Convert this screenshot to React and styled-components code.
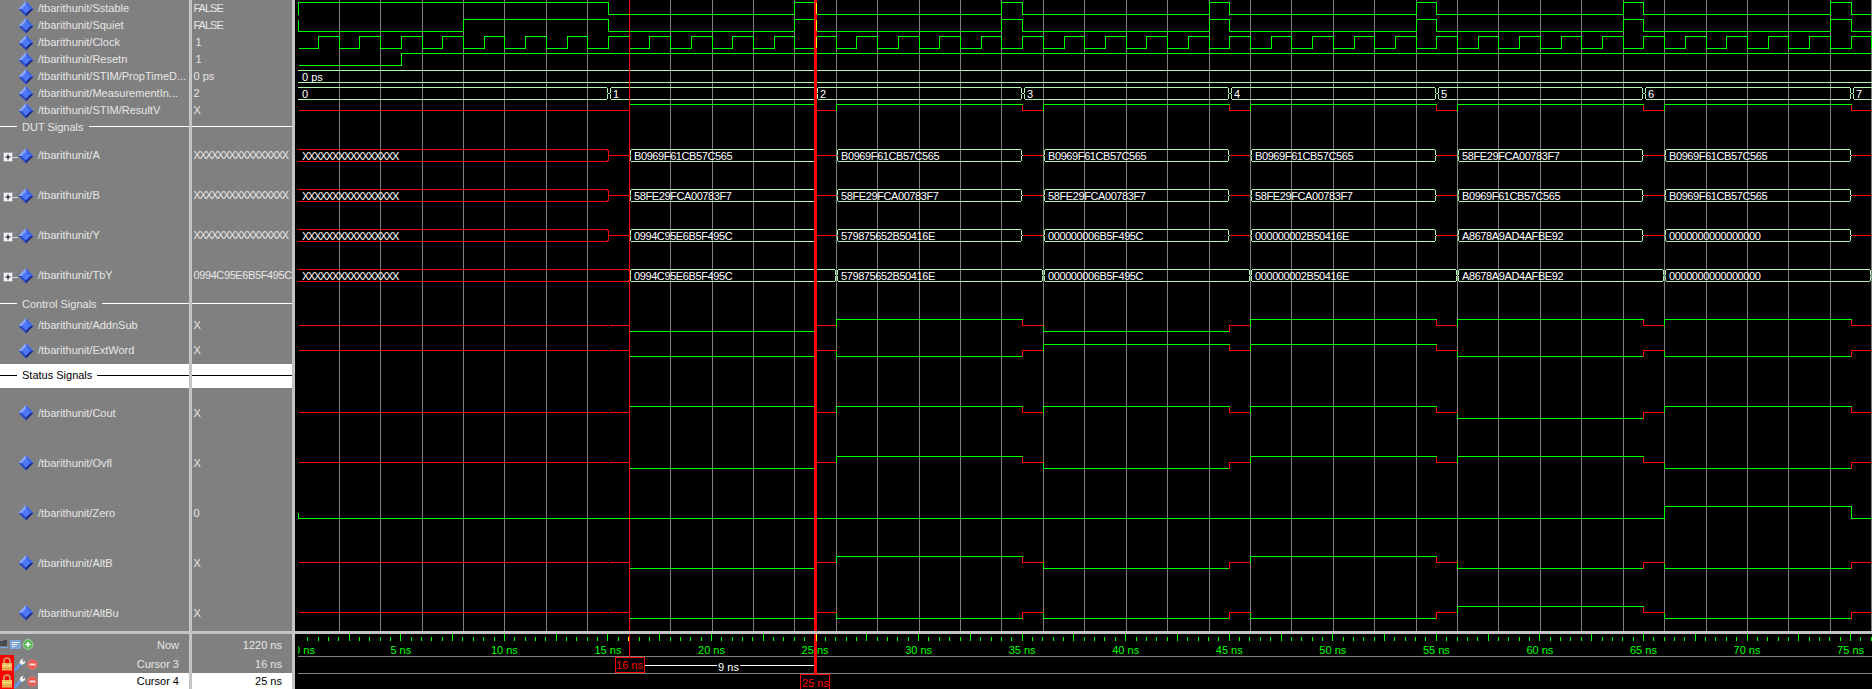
import styled, { createGlobalStyle } from 'styled-components';

const GlobalStyle = createGlobalStyle`
  html, body {
    margin: 0;
    background: #000;
    overflow: hidden;
  }
`;

// time axis: page x for a time in ns
const X = (t) => Math.round(297.3 + 20.71 * t);
const P = (t) => X(t) + 0.5;

const GREEN = '#00ff00';
const RED = '#ff0000';
const PALE = '#b2f5b2';
const GRID = '#808080';
const FONT = '"Liberation Sans", Arial, sans-serif';

const SLOTS = [16, 26, 36, 46, 56, 66];

const ROWS = [
  { name: '/tbarithunit/Sstable', value: 'FALSE', h: 17, tight: -1 },
  { name: '/tbarithunit/Squiet', value: 'FALSE', h: 17, tight: -1 },
  { name: '/tbarithunit/Clock', value: '1', h: 17, pad: 2 },
  { name: '/tbarithunit/Resetn', value: '1', h: 17, pad: 2 },
  { name: '/tbarithunit/STIM/PropTimeD...', value: '0 ps', h: 17 },
  { name: '/tbarithunit/MeasurementIn...', value: '2', h: 17 },
  { name: '/tbarithunit/STIM/ResultV', value: 'X', h: 17 },
  { divider: 'DUT Signals', h: 17 },
  { name: '/tbarithunit/A', value: 'XXXXXXXXXXXXXXXX', h: 40, plus: true, tight: -1.45 },
  { name: '/tbarithunit/B', value: 'XXXXXXXXXXXXXXXX', h: 40, plus: true, tight: -1.45 },
  { name: '/tbarithunit/Y', value: 'XXXXXXXXXXXXXXXX', h: 40, plus: true, tight: -1.45 },
  { name: '/tbarithunit/TbY', value: '0994C95E6B5F495C', h: 40, plus: true, tight: -0.4 },
  { divider: 'Control Signals', h: 17 },
  { name: '/tbarithunit/AddnSub', value: 'X', h: 25 },
  { name: '/tbarithunit/ExtWord', value: 'X', h: 25 },
  { divider: 'Status Signals', h: 25, selected: true },
  { name: '/tbarithunit/Cout', value: 'X', h: 50 },
  { name: '/tbarithunit/Ovfl', value: 'X', h: 50 },
  { name: '/tbarithunit/Zero', value: '0', h: 50 },
  { name: '/tbarithunit/AltB', value: 'X', h: 50 },
  { name: '/tbarithunit/AltBu', value: 'X', h: 50 },
];

const RESULTS = [
  { y: 110.5, levels: 'HHHHHH', up: 6 },
  { y: 325.5, levels: 'LHLHHH' },
  { y: 350.5, levels: 'LLHHLL' },
  { y: 412.5, levels: 'HHHHLH' },
  { y: 462.5, levels: 'LHLHHL' },
  { y: 562.5, levels: 'LHLHLL' },
  { y: 612.5, levels: 'LLLLHL' },
];

const HEX_A = ['B0969F61CB57C565', 'B0969F61CB57C565', 'B0969F61CB57C565', 'B0969F61CB57C565', '58FE29FCA00783F7', 'B0969F61CB57C565'];
const HEX_B = ['58FE29FCA00783F7', '58FE29FCA00783F7', '58FE29FCA00783F7', '58FE29FCA00783F7', 'B0969F61CB57C565', 'B0969F61CB57C565'];
const HEX_Y = ['0994C95E6B5F495C', '579875652B50416E', '000000006B5F495C', '000000002B50416E', 'A8678A9AD4AFBE92', '0000000000000000'];

const PULSES = [24, 25, 34, 35, 44, 45, 54, 55, 64, 65, 74, 75];

const bitPath = (start, y0, y1, times) => {
  let d = start;
  let hi = false;
  times.forEach((t) => {
    hi = !hi;
    d += `H${P(t)}V${hi ? y1 : y0}`;
  });
  return d + 'H1880';
};

// one bus segment with the little pointed ends
const busPath = (t1, t2, top, startOff = 1.5) => {
  const a = X(t1) + startOff;
  const b = X(t2) - 0.5;
  const mid = top + 6;
  const bot = top + 12;
  return `M${a + 1} ${top}H${b - 1}L${b} ${top + 1}V${mid - 1}L${b + 1} ${mid}L${b} ${mid + 1}V${bot - 1}L${b - 1} ${bot}H${a + 1}L${a} ${bot - 1}V${mid + 1}L${a - 1} ${mid}L${a} ${mid - 1}V${top + 1}Z`;
};

const clockTimes = [];
for (let t = 1; t <= 77; t++) clockTimes.push(t);

const Window = styled.div`
  width: 1872px;
  height: 689px;
  overflow: hidden;
  display: grid;
  grid-template-columns: 189px 100px 1577px;
  grid-template-rows: 631px 55px;
  column-gap: 3px;
  row-gap: 3px;
  background: #c4c4c4;
  font: 11px ${FONT};
`;

const Pane = styled.div`
  background: #808080;
  overflow: hidden;
  color: #e6e6e6;
`;

const WavePane = styled.div`
  background: #000;
  overflow: hidden;
  line-height: 0;
`;

const SignalRow = styled.div`
  height: ${(p) => p.$h}px;
  display: flex;
  align-items: center;
  box-sizing: border-box;
  white-space: nowrap;
  position: relative;
`;

// the tall rows sit a pixel lower than the short ones
const NameText = styled.span`
  margin-left: 4px;
  padding-bottom: ${(p) => (p.$h === 50 ? 0 : 2)}px;
`;

const ValueText = styled.span`
  margin-left: ${(p) => 1.5 + (p.$pad || 0)}px;
  padding-bottom: ${(p) => (p.$h === 50 ? 0 : 2)}px;
  letter-spacing: ${(p) => p.$tight || 0}px;
`;

const DividerLabel = styled.span`
  padding-bottom: 2px;
`;

const DividerRow = styled.div`
  height: ${(p) => p.$h}px;
  display: flex;
  align-items: center;
  gap: 5px;
  white-space: nowrap;
  background: ${(p) => (p.$selected ? '#fff' : 'transparent')};
  color: ${(p) => (p.$selected ? '#000' : '#e6e6e6')};
  box-sizing: border-box;
  border-top: ${(p) => (p.$selected ? '1px solid #808080' : '0')};
`;

const Rule = styled.i`
  display: block;
  height: 1px;
  margin-bottom: 2px;
  background: ${(p) => (p.$selected ? '#000' : '#fff')};
  flex: ${(p) => (p.$w ? `0 0 ${p.$w}px` : '1')};
`;

const IconSvg = styled.svg`
  display: block;
  flex: none;
`;

const DiamondSlot = styled.div`
  flex: none;
  margin-left: 18px;
`;

const PlusSlot = styled(IconSvg)`
  position: absolute;
  left: 3px;
  top: calc(50% - 4px);
`;

const FootRow = styled.div`
  height: ${(p) => p.$h}px;
  display: flex;
  align-items: center;
  box-sizing: border-box;
  background: ${(p) => (p.$selected ? '#fff' : 'transparent')};
  color: ${(p) => (p.$selected ? '#000' : '#e6e6e6')};
  justify-content: flex-end;
  padding-right: 10px;
`;

const NameFootRow = styled.div`
  height: ${(p) => p.$h}px;
  display: flex;
  align-items: stretch;
`;

const LockCell = styled.div`
  flex: none;
  width: 14px;
  background: ${(p) => (p.$on ? RED : 'transparent')};
  display: flex;
  align-items: center;
  justify-content: center;
`;

const ToolCell = styled.div`
  flex: none;
  width: ${(p) => p.$w}px;
  display: flex;
  align-items: center;
  gap: 1px;
`;

const FootLabel = styled.div`
  flex: 1;
  display: flex;
  align-items: center;
  justify-content: flex-end;
  padding-right: 10px;
  background: ${(p) => (p.$selected ? '#fff' : 'transparent')};
  color: ${(p) => (p.$selected ? '#000' : '#e6e6e6')};
`;

const WaveSvg = styled.svg`
  display: block;
  font: 11px ${FONT};
`;

const Diamond = () => (
  <IconSvg width="16" height="16" viewBox="0 0 16 16">
    <polygon points="8,0 15.5,8 8,8" fill="#3f66e6" />
    <polygon points="8,0 0.5,8 8,8" fill="#86a8ff" />
    <polygon points="0.5,8 8,15.5 8,8" fill="#2c49c4" />
    <polygon points="15.5,8 8,15.5 8,8" fill="#1c2c8c" />
    <polygon points="8,3.5 12.5,8 8,12.5 3.5,8" fill="#4f79f2" />
  </IconSvg>
);

const PlusBox = () => (
  <PlusSlot width="16" height="11" viewBox="0 0 16 11">
    <path d="M10 5.5H15" stroke="#d8d8d8" />
    <rect x="0.5" y="0.5" width="9" height="9" fill="#f4f4f8" stroke="#a0a0b0" />
    <path d="M2.5 5H7.5M5 2.5V7.5" stroke="#000" />
  </PlusSlot>
);

const Lock = () => (
  <IconSvg width="12" height="14" viewBox="0 0 12 14">
    <path d="M3 6V4a3 3 0 0 1 6 0v2" fill="none" stroke="#c8a878" strokeWidth="1.5" />
    <rect x="1" y="6" width="10" height="7.5" fill="#f0bd58" />
    <rect x="1" y="8" width="10" height="1" fill="#f8dc90" />
    <rect x="1" y="11" width="10" height="1" fill="#d89c40" />
  </IconSvg>
);

const Wrench = () => (
  <IconSvg width="12" height="13" viewBox="0 0 12 13">
    <path d="M1.5 11.5L7 5.5" stroke="#6a98e4" strokeWidth="3" strokeLinecap="round" />
    <path d="M5.5 5L6.5 2L9.5 0.5L8.5 3L9.5 4L11.5 2.5L11 5L8 7Z" fill="#f0f0f0" />
  </IconSvg>
);

const MinusCircle = () => (
  <IconSvg width="11" height="11" viewBox="0 0 11 11">
    <circle cx="5.5" cy="5.5" r="5" fill="#e85a50" stroke="#c88080" />
    <rect x="2.5" y="4.5" width="6" height="2" fill="#f8e0e0" />
  </IconSvg>
);

const NowTools = () => (
  <IconSvg width="34" height="12" viewBox="0 0 34 12">
    <path d="M0 2H3L4 1H7V7H0Z" fill="#4a4a52" />
    <path d="M0 8.5H8" stroke="#6fa8e8" />
    <rect x="10" y="1" width="11" height="9" fill="#7fa8d8" />
    <path d="M12 3.5H19M12 5.5H17M12 7.5H15" stroke="#f0f4ff" />
    <circle cx="28" cy="5.5" r="5" fill="#5fb85f" stroke="#a0d0a0" />
    <path d="M25.5 5.5H30.5M28 3V8" stroke="#fff" strokeWidth="1.4" />
  </IconSvg>
);

const BusText = ({ x, y, children, tight = -0.4 }) => (
  <text x={x} y={y} fill="#fff" letterSpacing={tight}>
    {children}
  </text>
);

const Bus = ({ top, labels, midline }) => {
  const mid = top + 6;
  const end = midline ? X(15) : X(16);
  return (
    <g fill="none" strokeWidth="1" shapeRendering="crispEdges">
      <path d={`M298 ${top}H${end - 1}L${end} ${top + 1}V${mid - 1}L${end + 1} ${mid}L${end} ${mid + 1}V${top + 11}L${end - 1} ${top + 12}H298`} stroke={RED} />
      <BusText x={302} y={top + 10.5} tight={-1.34}>XXXXXXXXXXXXXXXX</BusText>
      {midline && <path d={`M${X(15) + 1} ${mid}H${X(16) + 1}`} stroke={RED} />}
      {SLOTS.map((t, i) => (
        <g key={t}>
          <path d={busPath(t, midline ? t + 9 : t + 10, top)} stroke={PALE} />
          {midline && <path d={`M${X(t + 9) + 1} ${mid}H${X(t + 10) + 1}`} stroke={RED} />}
          <BusText x={X(t) + 5} y={top + 10.5}>{labels[i]}</BusText>
        </g>
      ))}
    </g>
  );
};

const Result = ({ y, levels, up }) => {
  const hi = y - (up || 6);
  const lo = y + 6;
  return (
    <g fill="none" shapeRendering="crispEdges">
      {y !== 110.5 ? (
        <>
          <path d={`M299 ${y}H${X(15)}`} stroke={RED} />
          <path d={`M${X(15) + 1} ${y}H${P(16)}`} stroke={RED} />
        </>
      ) : (
        <path d={`M299 ${y}H${P(16)}`} stroke={RED} />
      )}
      {SLOTS.map((t, i) => {
        const lvl = levels[i] === 'H' ? hi : lo;
        return (
          <g key={t}>
            <path d={`M${P(t)} ${y}V${lvl}H${P(t + 9)}`} stroke={t === 16 ? RED : GREEN} />
            <path d={`M${P(t)} ${lvl}H${P(t + 9)}`} stroke={GREEN} />
            <path d={`M${P(t + 9)} ${lvl}V${y}H${P(t + 10)}`} stroke={RED} />
          </g>
        );
      })}
    </g>
  );
};

const Waves = () => {
  const grid = [];
  for (let t = 2; t <= 76; t += 2) if (t !== 16) grid.push(t);
  return (
    <WaveSvg width="1577" height="631" viewBox="295 0 1577 631">
      <defs>
        <clipPath id="waveClip">
          <rect x="298" y="0" width="1574" height="631" />
        </clipPath>
      </defs>
      <g clipPath="url(#waveClip)">
        {grid.map((t) => (
          <path key={t} d={`M${P(t)} 0V631`} stroke={GRID} shapeRendering="crispEdges" />
        ))}
        <g fill="none" stroke={GREEN} shapeRendering="crispEdges">
          <path d={bitPath('M298.5 14.5V2.5', 2.5, 14.5, [15, ...PULSES])} />
          <path d={bitPath('M298.5 20V31.5', 31.5, 19.5, [8, 15, ...PULSES])} />
          <path d={bitPath('M299 48.5', 48.5, 36.5, clockTimes)} />
          <path d={bitPath('M299 65.5', 65.5, 53.5, [5])} />
          <path d={`M298.5 513V518.5H${P(66)}V506.5H${P(75)}V518.5H1880`} />
        </g>
        <g fill="none" stroke={PALE} shapeRendering="crispEdges">
          <path d="M298 70.5H1880M298 82.5H1880" />
          <path d={busPath(-1, 15, 87.5)} />
          {[15, 25, 35, 45, 55, 65].map((t) => (
            <path key={t} d={busPath(t, t + 10, 87.5, 2.5)} />
          ))}
          <path d={busPath(75, 90, 87.5, 2.5)} />
        </g>
        <BusText x={302} y={80.5} tight={0}>0 ps</BusText>
        {['0', '1', '2', '3', '4', '5', '6', '7'].map((n, i) => (
          <BusText key={n} x={i === 0 ? 302 : X(5 + i * 10) + 5} y={98} tight={0}>{n}</BusText>
        ))}
        {RESULTS.map((r) => (
          <Result key={r.y} {...r} />
        ))}
        <Bus top={149.5} labels={HEX_A} midline />
        <Bus top={189.5} labels={HEX_B} midline />
        <Bus top={229.5} labels={HEX_Y} midline />
        <Bus top={269.5} labels={HEX_Y} />
        <path d={`M${P(16)} 0V631`} stroke={RED} shapeRendering="crispEdges" />
        <rect x={X(25) - 1} y="0" width="3" height="631" fill={RED} />
        <path d={`M${X(25) + 1.5} 3V14M${X(25) + 1.5} 20V31M${X(25) + 1.5} 37V48`} stroke="#ffff00" shapeRendering="crispEdges" />
      </g>
    </WaveSvg>
  );
};

const Ruler = () => {
  const ticks = [];
  for (let i = 0; i <= 153; i++) ticks.push(i * 0.5);
  const labels = [];
  for (let t = 0; t <= 75; t += 5) labels.push(t);
  return (
    <WaveSvg width="1577" height="55" viewBox="295 634 1577 55">
      <defs>
        <clipPath id="rulerClip">
          <rect x="298" y="634" width="1574" height="55" />
        </clipPath>
      </defs>
      <g clipPath="url(#rulerClip)">
        {ticks.map((t) => {
          const major = t % 2.5 === 0;
          const cursor = t === 16 || t === 25;
          return (
            <path
              key={t}
              d={`M${Math.floor(297.3 + 20.71 * t) + 0.5} ${major ? 634 : 637}V641`}
              stroke={cursor ? '#ffff00' : GREEN}
              shapeRendering="crispEdges"
            />
          );
        })}
        {labels.map((t) => (
          <text key={t} x={t === 0 ? 304.5 : 297.3 + 20.71 * t} y="654" fill={GREEN} textAnchor="middle">
            {t} ns
          </text>
        ))}
        <path d="M298 656.5H1880M298 673.5H1880" stroke={GRID} shapeRendering="crispEdges" />
        <path d={`M${P(16)} 634V658`} stroke={RED} shapeRendering="crispEdges" />
        <rect x={X(25) - 1} y="634" width="3" height="40" fill={RED} />
        <path d={`M${X(25) + 1.5} 634V641`} stroke="#ffff00" shapeRendering="crispEdges" />
        <path d="M644 665.5H717M740 665.5H814" stroke="#fff" shapeRendering="crispEdges" />
        <text x="728.5" y="671" fill="#fff" textAnchor="middle">9 ns</text>
        <rect x="615" y="657.5" width="29" height="15" fill="#000" stroke={RED} shapeRendering="crispEdges" />
        <text x="629.5" y="669" fill={RED} textAnchor="middle">16 ns</text>
        <rect x="800.5" y="674.5" width="29" height="18" fill="#000" stroke={RED} shapeRendering="crispEdges" />
        <text x="815.5" y="687" fill={RED} textAnchor="middle">25 ns</text>
      </g>
    </WaveSvg>
  );
};

const NameCell = ({ row }) => {
  if (row.divider) {
    return (
      <DividerRow $h={row.h} $selected={row.selected}>
        <Rule $w={17} $selected={row.selected} />
        <DividerLabel>{row.divider}</DividerLabel>
        <Rule $selected={row.selected} />
      </DividerRow>
    );
  }
  return (
    <SignalRow $h={row.h}>
      {row.plus && <PlusBox />}
      <DiamondSlot>
        <Diamond />
      </DiamondSlot>
      <NameText $h={row.h}>{row.name}</NameText>
    </SignalRow>
  );
};

const ValueCell = ({ row }) => {
  if (row.divider) {
    return (
      <DividerRow $h={row.h} $selected={row.selected}>
        <Rule $selected={row.selected} />
      </DividerRow>
    );
  }
  return (
    <SignalRow $h={row.h}>
      <ValueText $h={row.h} $tight={row.tight} $pad={row.pad}>{row.value}</ValueText>
    </SignalRow>
  );
};

const App = () => (
  <>
    <GlobalStyle />
    <Window>
      <Pane>
        {ROWS.map((row, i) => (
          <NameCell key={i} row={row} />
        ))}
      </Pane>
      <Pane>
        {ROWS.map((row, i) => (
          <ValueCell key={i} row={row} />
        ))}
      </Pane>
      <WavePane>
        <Waves />
      </WavePane>

      <Pane>
        <NameFootRow $h={21}>
          <ToolCell $w={36}>
            <NowTools />
          </ToolCell>
          <FootLabel>Now</FootLabel>
        </NameFootRow>
        <NameFootRow $h={18}>
          <LockCell $on>
            <Lock />
          </LockCell>
          <ToolCell $w={24}>
            <Wrench />
            <MinusCircle />
          </ToolCell>
          <FootLabel>Cursor 3</FootLabel>
        </NameFootRow>
        <NameFootRow $h={16}>
          <LockCell $on>
            <Lock />
          </LockCell>
          <ToolCell $w={24}>
            <Wrench />
            <MinusCircle />
          </ToolCell>
          <FootLabel $selected>Cursor 4</FootLabel>
        </NameFootRow>
      </Pane>
      <Pane>
        <FootRow $h={21}>1220 ns</FootRow>
        <FootRow $h={18}>16 ns</FootRow>
        <FootRow $h={16} $selected>25 ns</FootRow>
      </Pane>
      <WavePane>
        <Ruler />
      </WavePane>
    </Window>
  </>
);

export default App;
